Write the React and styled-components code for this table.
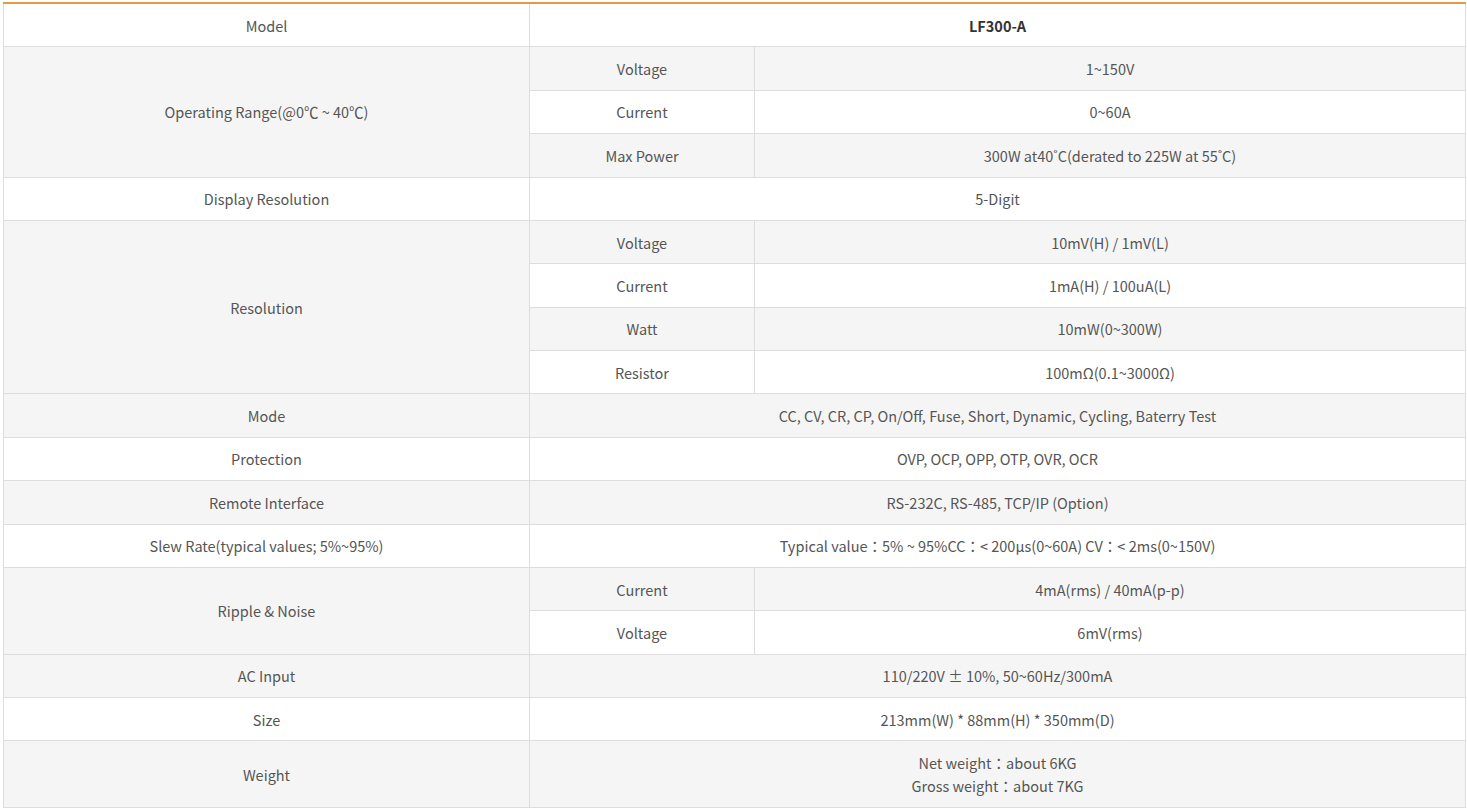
import styled, { createGlobalStyle } from "styled-components";

const GlobalStyle = createGlobalStyle`
  html, body {
    margin: 0;
    padding: 0;
    background: #ffffff;
  }
  body {
    font-family: "Noto Sans CJK KR", "Noto Sans", sans-serif;
  }
`;

const Page = styled.div`
  padding: 2px 2px 0 3px;
`;

const Table = styled.table`
  width: 1462px;
  border-collapse: collapse;
  table-layout: fixed;
  border-top: 2px solid #e09a48;

  tr:nth-child(even) td {
    background: #f5f5f5;
  }
`;

const Cell = styled.td`
  border: 1px solid #dddddd;
  padding: 9.7px 8px;
  height: 23px;
  line-height: 23px;
  font-size: 14.5px;
  color: #555555;
  text-align: center;
  vertical-align: middle;
  background: #ffffff;
  font-weight: ${(p) => (p.$bold ? 700 : 400)};
  ${(p) => p.$bold && "color: #333333;"}
`;

const rows = [
  { label: "Model", value: "LF300-A", bold: true },
  {
    label: "Operating Range(@0℃ ~ 40℃)",
    sub: [
      ["Voltage", "1~150V"],
      ["Current", "0~60A"],
      ["Max Power", "300W at40˚C(derated to 225W at 55˚C)"],
    ],
  },
  { label: "Display Resolution", value: "5-Digit" },
  {
    label: "Resolution",
    sub: [
      ["Voltage", "10mV(H) / 1mV(L)"],
      ["Current", "1mA(H) / 100uA(L)"],
      ["Watt", "10mW(0~300W)"],
      ["Resistor", "100mΩ(0.1~3000Ω)"],
    ],
  },
  {
    label: "Mode",
    value: "CC, CV, CR, CP, On/Off, Fuse, Short, Dynamic, Cycling, Baterry Test",
  },
  { label: "Protection", value: "OVP, OCP, OPP, OTP, OVR, OCR" },
  { label: "Remote Interface", value: "RS-232C, RS-485, TCP/IP (Option)" },
  {
    label: "Slew Rate(typical values; 5%~95%)",
    value: "Typical value：5% ~ 95%CC：< 200μs(0~60A) CV：< 2ms(0~150V)",
  },
  {
    label: "Ripple & Noise",
    sub: [
      ["Current", "4mA(rms) / 40mA(p-p)"],
      ["Voltage", "6mV(rms)"],
    ],
  },
  { label: "AC Input", value: "110/220V ± 10%, 50~60Hz/300mA" },
  { label: "Size", value: "213mm(W) * 88mm(H) * 350mm(D)" },
  {
    label: "Weight",
    value: (
      <>
        Net weight：about 6KG
        <br />
        Gross weight：about 7KG
      </>
    ),
  },
];

export default function App() {
  const body = [];
  rows.forEach((row, i) => {
    if (row.sub) {
      row.sub.forEach(([name, val], j) => {
        body.push(
          <tr key={`${i}-${j}`}>
            {j === 0 && <Cell rowSpan={row.sub.length}>{row.label}</Cell>}
            <Cell>{name}</Cell>
            <Cell>{val}</Cell>
          </tr>
        );
      });
    } else {
      body.push(
        <tr key={i}>
          <Cell>{row.label}</Cell>
          <Cell colSpan={2} $bold={row.bold}>
            {row.value}
          </Cell>
        </tr>
      );
    }
  });

  return (
    <Page>
      <GlobalStyle />
      <Table>
        <colgroup>
          <col style={{ width: 526 }} />
          <col style={{ width: 225 }} />
          <col style={{ width: 711 }} />
        </colgroup>
        <tbody>{body}</tbody>
      </Table>
    </Page>
  );
}
